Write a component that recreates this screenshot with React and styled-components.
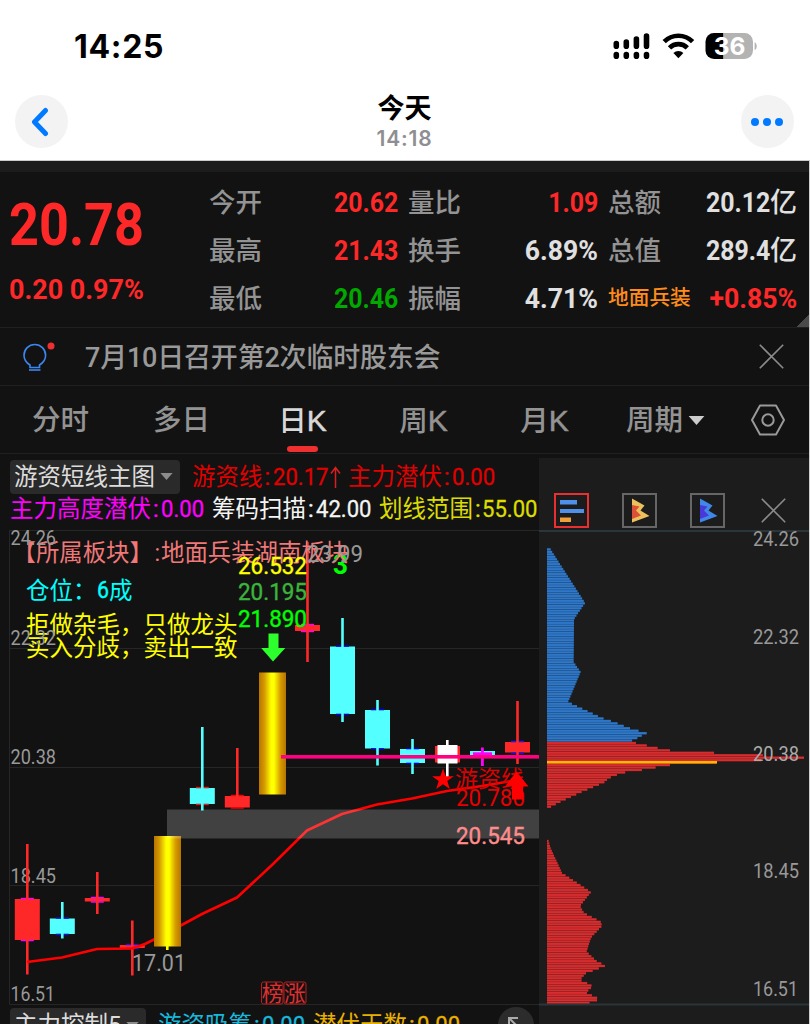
import React from 'react';
import styled, { createGlobalStyle, css } from 'styled-components';

const GlobalStyle = createGlobalStyle`
  * { box-sizing: border-box; }
  body {
    margin: 0;
    background: #fff;
  }
`

const Page = styled.div`
  width: 810px;
  height: 1024px;
  overflow: hidden;
  display: flex;
  flex-direction: column;
  font-family: Roboto, "Noto Sans CJK SC", sans-serif;
  background: #fff;
`

/* ---------- phone header ---------- */

const StatusBar = styled.div`
  height: 93px;
  flex: none;
  padding: 0 53px 0 74px;
  display: flex;
  align-items: center;
  justify-content: space-between;
`
const Clock = styled.div`
  font-family: Inter, sans-serif;
  font-size: 32px;
  font-weight: 700;
  color: #000;
  letter-spacing: 0.7px;
`
const NavBar = styled.div`
  height: 68px;
  flex: none;
  padding: 0 16px 0 15px;
  display: flex;
  align-items: flex-start;
  justify-content: space-between;
  border-bottom: 1px solid #c9cdcc;
`
const RoundButton = styled.div`
  width: 53px;
  height: 53px;
  margin-top: 2px;
  border-radius: 50%;
  background: #f3f3f3;
  display: flex;
  align-items: center;
  justify-content: center;
`
const Heading = styled.div`
  display: flex;
  flex-direction: column;
  align-items: center;
`
const Title = styled.div`
  font-size: 27px;
  line-height: 32px;
  font-weight: 700;
  color: #000;
`
const SubTitle = styled.div`
  font-family: Inter, sans-serif;
  font-size: 21px;
  line-height: 28px;
  font-weight: 600;
  color: #8e8e93;
  letter-spacing: 0.8px;
`

/* ---------- quote ---------- */

const Dark = styled.div`
  flex: 1;
  min-height: 0;
  width: 809px;
  display: flex;
  flex-direction: column;
  background: #121212;
  border-top: 11px solid #1c1c1c;
  box-shadow: 1px 0 0 #cfcfcf;
`
const Quote = styled.div`
  height: 156px;
  flex: none;
  display: flex;
  border-bottom: 1px solid #202020;
  background: linear-gradient(135deg, transparent 50%, #4a4a4a 50%) right bottom / 13px 13px no-repeat;
`
const PriceBlock = styled.div`
  width: 209px;
  padding: 18px 0 0 9px;
  color: #ff2828;
`
const Num = styled.span`
  display: inline-block;
  transform: scaleX(${p => p.$x || 0.87});
  transform-origin: ${p => p.$from || 'right'} center;
  white-space: nowrap;
`
const Price = styled.div`
  font-size: 60px;
  line-height: 70px;
  font-weight: 700;
`
const Change = styled.div`
  margin-top: 12px;
  font-size: 28.5px;
  line-height: 36px;
  font-weight: 700;
`
const Stats = styled.div`
  display: grid;
  grid-template-columns: 189px 190px 189px;
  grid-auto-rows: 48px;
  column-gap: 10px;
  padding-top: 6px;
`
const Stat = styled.div`
  display: flex;
  align-items: center;
  justify-content: space-between;
  font-size: 28px;
  font-weight: 700;
  color: ${p => p.$color || '#e0e0e0'};
`
const StatLabel = styled.span`
  padding-bottom: ${p => (p.$sector ? 5 : 4)}px;
  font-size: ${p => (p.$sector ? 20.7 : 26.5)}px;
  font-weight: 500;
  color: ${p => (p.$sector ? '#ff8c1a' : '#939393')};
`
const Unit = styled.span`
  font-size: 27px;
  font-weight: 500;
  line-height: 1;
`

/* ---------- notice and tabs ---------- */

const Notice = styled.div`
  height: 58px;
  flex: none;
  display: flex;
  align-items: center;
  padding: 0 25px 0 22px;
  border-bottom: 1px solid #202020;
`
const NoticeText = styled.div`
  flex: 1;
  margin-left: 29px;
  padding-bottom: 2px;
  font-size: 27px;
  font-weight: 500;
  color: #999;
  letter-spacing: -0.2px;
`
const Tabs = styled.div`
  height: 68px;
  flex: none;
  display: flex;
  border-bottom: 1px solid #202020;
`
const Tab = styled.div`
  width: 121px;
  display: flex;
  flex-direction: column;
  align-items: center;
  padding-top: 14px;
  font-size: 28.5px;
  line-height: 41px;
  font-weight: 500;
  color: ${p => (p.$active ? '#d8d8d8' : '#939393')};
`
const TabLabel = styled.div`
  display: flex;
  align-items: center;
  gap: 5px;
`
const Letter = styled.span`
  font-family: "Liberation Sans", sans-serif;
  font-size: 30px;
  font-weight: 400;
  -webkit-text-stroke: 0.5px currentColor;
`
const TabMark = styled.div`
  width: 31px;
  height: 6px;
  margin-top: 4px;
  border-radius: 3px;
  background: #ee3030;
`
const Settings = styled.div`
  flex: 1;
  display: flex;
  align-items: center;
  justify-content: center;
`

/* ---------- chart ---------- */

const ChartArea = styled.div`
  flex: 1;
  display: flex;
  min-height: 0;
`
const Main = styled.div`
  width: 539px;
  display: flex;
  flex-direction: column;
`
const indicatorText = css`
  font-size: 23.5px;
  line-height: 32px;
  white-space: nowrap;
`
const IndicatorRow = styled.div`
  ${indicatorText}
  height: ${p => p.$h}px;
  flex: none;
  display: flex;
  align-items: center;
  padding-left: 10px;
  padding-top: ${p => p.$top || 0}px;
  padding-bottom: ${p => p.$bottom || 0}px;
`
const Picker = styled.div`
  width: ${p => p.$w}px;
  height: 34px;
  flex: none;
  padding: 0 7px 0 4px;
  margin-right: ${p => p.$gap}px;
  border-radius: 4px;
  background: #2a2a2a;
  color: #dcdcdc;
  display: flex;
  align-items: center;
  justify-content: space-between;
`
const ReadingBox = styled.span`
  flex: none;
  display: inline-flex;
  align-items: center;
  width: ${p => p.$w}px;
  color: ${p => p.$color};
`
const Colon = styled.span`
  width: 9px;
  padding-left: 2px;
  -webkit-text-stroke: 0.4px currentColor;
`
const ReadingValue = styled(Num)`
  margin: 0 -3px 0 1px;
  font-size: 24px;
  -webkit-text-stroke: 0.3px currentColor;
`
const Side = styled.div`
  flex: 1;
  margin-top: 4px;
  background: #1c1c1c;
`
const SideTools = styled.div`
  height: 72px;
  padding: 35px 0 0 15px;
  display: flex;
  align-items: flex-start;
  gap: 33px;
`
const ToolButton = styled.div`
  width: 35px;
  height: 35px;
  border: 2px solid ${p => (p.$active ? '#e83030' : '#666')};
`
const CloseTool = styled.div`
  height: 35px;
  margin-left: 3px;
  display: flex;
  align-items: center;
`
const Expand = styled.div`
  width: 36px;
  height: 36px;
  flex: none;
  margin-left: 37px;
  border-radius: 50%;
  background: #2c2c2c;
  display: flex;
  align-items: center;
  justify-content: center;
`
const Svg = styled.svg`
  display: block;
  flex: none;
  font-family: Roboto, "Noto Sans CJK SC", sans-serif;
`

const stats = [
  ['今开', '20.62', '#ff2828'],
  ['量比', '1.09', '#ff2828'],
  ['总额', '20.12', '#e0e0e0', '亿'],
  ['最高', '21.43', '#ff2828'],
  ['换手', '6.89%'],
  ['总值', '289.4', '#e0e0e0', '亿'],
  ['最低', '20.46', '#00a800'],
  ['振幅', '4.71%'],
  ['地面兵装', '+0.85%', '#ff2828'],
]

const RED = '#ff2828'
const CYAN = '#54ffff'

// x, wick top, wick bottom, body top, body bottom, colour, tick colour
const candles = [
  [27.3, 844, 974.5, 899, 940, RED, '#f0f'],
  [62.3, 902, 938.5, 918.5, 934, CYAN, '#11d'],
  [97.3, 872, 914, 898, 901.5, RED, '#f0f'],
  [132.3, 920.5, 975.5, 945, 948, RED, '#31d'],
  [202.3, 727, 810.5, 788, 804, CYAN, '#d22'],
  [237.3, 748, 800, 796, 807.5, RED, '#f00'],
  [307.5, 542, 662, 625, 631, RED, '#f0f'],
  [342.5, 618, 722, 646.5, 714, CYAN, '#00d'],
  [377.5, 700, 765.5, 710, 748.5, CYAN, '#00d'],
  [412.5, 739, 774, 749, 763, CYAN, '#00d'],
  [517.5, 701, 764, 742, 752.5, RED, '#31d'],
]

const average = '27,962 62,957.5 97,949 132,948.5 145,944 167,933 202,914 237,897.5 272,865 307,830.5 342,814 377,804.5 412,798.5 447,791 482,786 517,780'

// y, right edge of the chip distribution
const chips = [
  [547, 549], [603, 585], [619, 574], [662, 573.5], [672, 580.5], [702, 568], [710, 585],
  [718, 602], [722, 614], [728, 629], [730.5, 637.5], [733, 647], [735.5, 642], [738, 637.5],
  [740.6, 632], [742.9, 635.5], [745.4, 646.5], [747.9, 657.5], [750.3, 669], [752.8, 714],
  [755.2, 762], [757.7, 804], [760.1, 762], [762.6, 716.5], [765.1, 669], [767.5, 655.5],
  [770, 641.5], [772.5, 624.5], [775, 616.5], [778, 609], [782.5, 604], [792, 581.5],
  [801.5, 561], [807, 550.5], [808, 547], [840, 547], [841, 548.5], [848, 550.5], [873, 562],
  [882.5, 576.5], [892, 591], [906, 580], [913, 584], [921.5, 600.5], [926, 602], [937.5, 591],
  [951.7, 586.5], [961, 596.5], [965.7, 605.5], [970.5, 593.5], [973.5, 585.5], [980, 580],
  [985, 591.5], [988, 591], [992.5, 586], [998, 597.5], [1000.5, 597], [1004, 585],
]

const chipEdge = y => {
  const i = Math.max(1, chips.findIndex(c => c[0] >= y))
  const [y0, x0] = chips[i - 1]
  const [y1, x1] = chips[i]
  return x0 + ((x1 - x0) * (y - y0)) / (y1 - y0)
}

const chipRows = []
for (let k = -85; k <= 100; k++) {
  const y = 757.7 + k * 2.45
  const edge = chipEdge(y)
  if (edge > 547.5) chipRows.push([y, edge])
}

const Label = ({ x, y, w, size = 20, fill = '#999', bold, thick, children }) => (
  <text
    x={x}
    y={y}
    fontSize={size}
    fill={fill}
    fontWeight={bold ? 700 : 400}
    stroke={thick ? fill : 'none'}
    strokeWidth="0.4"
    textLength={w}
    lengthAdjust="spacingAndGlyphs"
  >
    {children}
  </text>
)

const Caret = ({ color = '#8c8c8c', w = 13, h = 7 }) => (
  <svg width={w} height={h} viewBox="0 0 14 8"><path d="M0 0h14L7 8z" fill={color} /></svg>
)

const Cross = () => (
  <svg width="25" height="25" viewBox="0 0 25 25"><path d="M.8.8l23.4 23.4M24.2.8L.8 24.2" stroke="#8a8a8a" strokeWidth="1.6" /></svg>
)

const UpMark = () => (
  <svg width="11" height="22" viewBox="0 0 11 22"><path d="M5.5 22V1.5M1 7.5l4.5-6 4.5 6" fill="none" stroke="#d82020" strokeWidth="1.5" /></svg>
)

const Reading = ({ w, color, name, value, up }) => (
  <ReadingBox $w={w} $color={color}>
    {name}<Colon>:</Colon><ReadingValue $from="left" $x={0.92}>{value}</ReadingValue>
    {up && <UpMark />}
  </ReadingBox>
)

const StatusIcons = () => (
  <svg width="145" height="30" viewBox="612 32 145 30">
    <g stroke="#000" strokeWidth="5.6" strokeLinecap="round">
      <path d="M616.3 43.5v2.7M626.3 42v4.2M636.4 39v7.2M646.5 36v10.2" />
      <path d="M616.3 54.6v1.7M626.3 54.6v1.7M636.4 54.6v1.7M646.5 54.6v1.7" />
    </g>
    <g fill="none" stroke="#000" strokeWidth="4.6">
      <path d="M664.2 41.6a20 20 0 0 1 28.4 0" />
      <path d="M669.5 47.8a12.5 12.5 0 0 1 17.8 0" />
    </g>
    <path d="M678.4 58.2l-5-5.1a6.9 6.9 0 0 1 10 0z" fill="#000" />
    <path d="M714 33h9.5v26H714a8.5 8.5 0 0 1-8.5-8.5v-9A8.5 8.5 0 0 1 714 33z" fill="#000" />
    <path d="M723.5 33h21a8.5 8.5 0 0 1 8.5 8.5v9a8.5 8.5 0 0 1-8.5 8.5h-21z" fill="#b3b3b3" />
    <path d="M754.6 42.2c2.8.9 2.8 7 0 7.8z" fill="#b3b3b3" />
    <text x="729.5" y="54.8" textAnchor="middle" fontFamily="Inter, sans-serif" fontSize="24.5" fontWeight="700" fill="#fff">36</text>
  </svg>
)

const Bulb = () => (
  <svg width="34" height="32" viewBox="0 0 34 32">
    <g fill="none" stroke="#3c86f0" strokeWidth="1.6">
      <path d="M8 26.5V24C4.5 22 2 18.5 2 14.3a10.8 10.8 0 0 1 21.6 0c0 4.200-2.600 7.700-6.100 9.700v2.500z" />
      <path d="M7 29h11.5" />
    </g>
    <circle cx="29" cy="5" r="3.5" fill="#f03030" />
  </svg>
)

const Candle = ({ data }) => {
  const [x, top, bottom, open, close, color, tick] = data
  return (
    <g>
      <rect x={x - 12.5} y={open} width="25" height={close - open} fill={color} />
      <rect x={x - 6.5} y={open - 1.2} width="13" height="1.5" fill={tick} />
      <rect x={x - 6.5} y={close - 0.3} width="13" height="1.5" fill={tick} />
      <rect x={x - 1.3} y={top} width="2.6" height={bottom - top} fill={color} />
    </g>
  )
}

const KLine = () => (
  <Svg width="539" height="476" viewBox="0 530 539 476">
    <defs>
      <linearGradient id="gold">
        <stop offset="0" stopColor="#b87400" />
        <stop offset="0.2" stopColor="#d59a00" />
        <stop offset="0.45" stopColor="#ffff00" />
        <stop offset="0.56" stopColor="#ffff00" />
        <stop offset="0.8" stopColor="#d59a00" />
        <stop offset="1" stopColor="#b87400" />
      </linearGradient>
    </defs>
    <path d="M9.5 530V1004M9.5 530.5H539M9.5 648.5H539M9.5 767.5H539M9.5 885.5H539M9.5 1004.5H539" stroke="#262626" />

    <Label x={10.5} y={764} w={45.5}>20.38</Label>
    <Label x={10.5} y={882.5} w={45.5}>18.45</Label>
    <Label x={10.5} y={1001} w={44.5}>16.51</Label>

    {candles.map(c => <Candle key={c[0]} data={c} />)}
    <polyline points={average} fill="none" stroke="#f00" strokeWidth="2.6" strokeLinejoin="round" />
    <rect x="154" y="836" width="27" height="110.5" fill="url(#gold)" />
    <rect x="166" y="946" width="2.6" height="4" fill="#ff0" />
    <rect x="259" y="672.5" width="27" height="122" fill="url(#gold)" />
    <rect x="167" y="809.5" width="372" height="29" fill="#fff" fillOpacity="0.2" />

    <rect x="435" y="746" width="25" height="16.5" fill={RED} />
    <rect x="437.5" y="745" width="20" height="18.5" fill="#fff" />
    <rect x="446" y="740" width="2.6" height="38" fill="#fff" />
    <rect x="470" y="751" width="25" height="4" fill={CYAN} />
    <rect x="473" y="752.3" width="19" height="4.2" fill="#f0f" />
    <rect x="481" y="747.5" width="2.8" height="18.5" fill="#f0f" />
    <rect x="281" y="755" width="258" height="3.6" fill="#ff0080" />

    <Label x={333} y={573.5} w={15} size={28} bold fill="#0f0">3</Label>
    <text x="12.5" y="561" fontSize="23.4" fill="#f07878">【所属板块】</text>
    <text x="154.5" y="561" fontSize="23.4" fill="#f07878">:</text>
    <text x="161" y="561" fontSize="23.4" fill="#f07878">地面兵装湖南板块</text>
    <Label x={307} y={562} w={56} size={23}>23.99</Label>
    <text x="26" y="599" fontSize="23.5" fill="#0ff">仓位：</text>
    <Label x={97} y={598} w={12} size={24} thick fill="#0ff">6</Label>
    <text x="109" y="599" fontSize="23.5" fill="#0ff">成</text>
    <text x="26" y="633" fontSize="23.5" fill="#ff0">拒做杂毛，只做龙头</text>
    <text x="26" y="655.5" fontSize="23.5" fill="#ff0">买入分歧，卖出一致</text>
    <Label x={10.5} y={545} w={45.5}>24.26</Label>
    <Label x={10.5} y={645} w={45.5}>22.32</Label>

    <Label x={238} y={574} w={69} size={24} thick fill="#ff0">26.532</Label>
    <Label x={238} y={600} w={69} size={24} thick fill="#3cb43c">20.195</Label>
    <Label x={238} y={627} w={69} size={24} thick fill="#0f0">21.890</Label>
    <path d="M268.5 633.5h10V648h6.8L273 661.5 261.2 648h7.3z" fill="#2cff2c" />

    <path d="M443 768.5l2.7 7.7h8.2l-6.6 4.9 2.5 8-6.8-4.8-6.8 4.8 2.5-8-6.6-4.9h8.2z" fill="#f00" />
    <text x="455" y="787" fontSize="23" fill="#d00">游资线</text>
    <Label x={456} y={806} w={69} size={23.5} fill="#e60000">20.780</Label>
    <path d="M516.5 771.5l12 15H523v13h-11v-13h-7z" fill="#f00" />
    <Label x={456} y={844} w={69} size={24} thick fill="#ff8c8c">20.545</Label>
    <Label x={132} y={970.5} w={54} size={23}>17.01</Label>

    <g fill="none" stroke="#b02020">
      <rect x="261.5" y="982" width="21.5" height="22" rx="2" />
      <rect x="284" y="982" width="22" height="22" rx="2" />
    </g>
    <text x="261.8" y="1000.5" fontSize="21.5" fill="#e03030">榜</text>
    <text x="284" y="1000.5" fontSize="21.5" fill="#e03030">涨</text>
  </Svg>
)

const ChipChart = () => (
  <Svg width="270" height="476" viewBox="539 530 270 476">
    {chipRows.map(([y, edge]) => (
      <g key={y}>
        <rect x="547" y={y - 1.225} width={edge - 547} height="2.45" fill={y < 741.5 ? '#245a96' : '#972526'} />
        <rect x="547" y={y - 0.9} width={edge - 547} height="1.85" fill={y < 741.5 ? '#2f77c8' : '#d72d2f'} />
      </g>
    ))}
    <rect x="547" y="761" width="170" height="2.5" fill="#ffb800" />
    <path d="M539 531h270M539 1004.5h270" stroke="#2b363a" strokeWidth="2" />
    <Label x={753} y={545.5} w={46}>24.26</Label>
    <Label x={753} y={643.5} w={46}>22.32</Label>
    <Label x={753} y={760.5} w={46} fill="#aaa">20.38</Label>
    <Label x={753} y={878} w={46}>18.45</Label>
    <Label x={753} y={995.5} w={45}>16.51</Label>
  </Svg>
)

const Flag = ({ outer, inner }) => (
  <svg width="31" height="31" viewBox="0 0 31 31">
    <path d="M8 3.5l12.5 7-4 5 9 5.5L8 27.5z" fill={outer} />
    <path d="M8 10l7.5 1.5-3.5 4 5 5L8 24z" fill={inner} />
  </svg>
)

const App = () => {
  return (
    <>
      <GlobalStyle />
      <Page>
        <StatusBar>
          <Clock>14:25</Clock>
          <StatusIcons />
        </StatusBar>
        <NavBar>
          <RoundButton>
            <svg width="22" height="30" viewBox="0 0 22 30"><path d="M14.5 3.5L3.500 15l11 11.500" fill="none" stroke="#007aff" strokeWidth="5" strokeLinecap="round" strokeLinejoin="round" /></svg>
          </RoundButton>
          <Heading>
            <Title>今天</Title>
            <SubTitle>14:18</SubTitle>
          </Heading>
          <RoundButton>
            <svg width="34" height="8" viewBox="0 0 34 8" fill="#007aff"><circle cx="5" cy="4" r="4" /><circle cx="17" cy="4" r="4" /><circle cx="29" cy="4" r="4" /></svg>
          </RoundButton>
        </NavBar>

        <Dark>
          <Quote>
            <PriceBlock>
              <Price><Num $from="left">20.78</Num></Price>
              <Change><Num $from="left" $x={0.945}>0.20 0.97%</Num></Change>
            </PriceBlock>
            <Stats>
              {stats.map(([label, value, color, unit]) => (
                <Stat key={label} $color={color}>
                  <StatLabel $sector={label.length > 2}>{label}</StatLabel>
                  <span><Num $x={value.includes('%') ? 0.95 : 0.89}>{value}</Num>{unit && <Unit>{unit}</Unit>}</span>
                </Stat>
              ))}
            </Stats>
          </Quote>

          <Notice>
            <Bulb />
            <NoticeText>7月10日召开第2次临时股东会</NoticeText>
            <Cross />
          </Notice>

          <Tabs>
            <Tab>分时</Tab>
            <Tab>多日</Tab>
            <Tab $active><span>日<Letter>K</Letter></span><TabMark /></Tab>
            <Tab><span>周<Letter>K</Letter></span></Tab>
            <Tab><span>月<Letter>K</Letter></span></Tab>
            <Tab><TabLabel>周期<Caret color="#ccc" w={17} h={9} /></TabLabel></Tab>
            <Settings>
              <svg width="34" height="32" viewBox="0 0 34 32" fill="none" stroke="#999" strokeWidth="2">
                <path d="M9 1.5h16L33 16l-8 14.5H9L1 16z" strokeLinejoin="round" />
                <circle cx="17" cy="16" r="5.7" />
              </svg>
            </Settings>
          </Tabs>

          <ChartArea>
            <Main>
              <IndicatorRow $h={40} $top={5}>
                <Picker $w={170} $gap={12}>游资短线主图<Caret /></Picker>
                <Reading w={156} color="#e00000" name="游资线" value="20.17" up />
                <Reading w={150} color="#e00000" name="主力潜伏" value="0.00" />
              </IndicatorRow>
              <IndicatorRow $h={36} $bottom={6}>
                <Reading w={202} color="#f0f" name="主力高度潜伏" value="0.00" />
                <Reading w={167} color="#f4f4f4" name="筹码扫描" value="42.00" />
                <Reading w={160} color="#dcdc00" name="划线范围" value="55.00" />
              </IndicatorRow>
              <KLine />
              <IndicatorRow $h={36} $top={2}>
                <Picker $w={136} $gap={12}>主力控制5<Caret /></Picker>
                <Reading w={155} color="#18b8dc" name="游资吸筹" value="0.00" />
                <Reading w={148} color="#e8b000" name="潜伏天数" value="0.00" />
                <Expand>
                  <svg width="18" height="18" viewBox="0 0 18 18"><path d="M2 11V2h9M2 2l12 12" fill="none" stroke="#aaa" strokeWidth="2" /></svg>
                </Expand>
              </IndicatorRow>
            </Main>

            <Side>
              <SideTools>
                <ToolButton $active>
                  <svg width="31" height="31" viewBox="0 0 31 31">
                    <path d="M4 5h17v4.5H4zM4 14h24v4H4z" fill="#5090e8" />
                    <path d="M4 22.5h11V27H4z" fill="#f0a03c" />
                  </svg>
                </ToolButton>
                <ToolButton><Flag outer="#ecc05c" inner="#dd5038" /></ToolButton>
                <ToolButton><Flag outer="#4088e8" inner="#4838d8" /></ToolButton>
                <CloseTool><Cross /></CloseTool>
              </SideTools>
              <ChipChart />
            </Side>
          </ChartArea>
        </Dark>
      </Page>
    </>
  )
}

export default App
